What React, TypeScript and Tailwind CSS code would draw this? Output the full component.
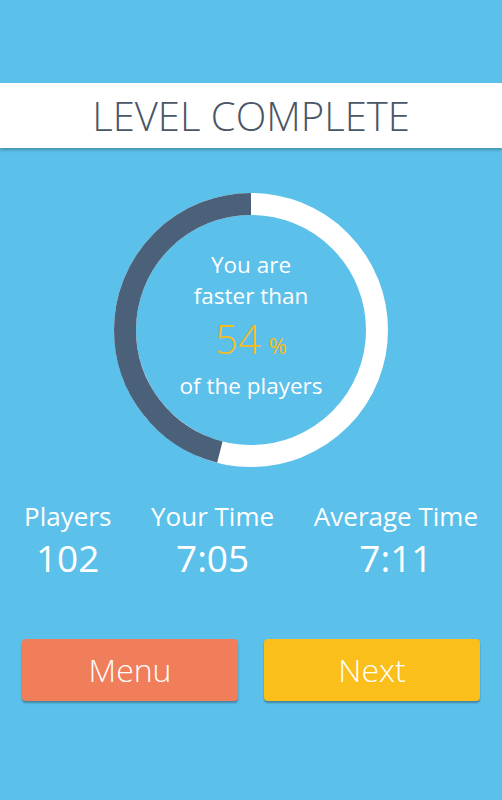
import React from "react";

const stats = [
  { label: "Players", value: "102" },
  { label: "Your Time", value: "7:05" },
  { label: "Average Time", value: "7:11" },
];

function Ring({ percent }: { percent: number }) {
  const r = 126;
  const c = 2 * Math.PI * r;
  const dark = (100 - percent) / 100;
  return (
    <svg width="274" height="274" viewBox="0 0 274 274">
      <circle cx="137" cy="137" r={r} fill="none" stroke="#ffffff" strokeWidth="22" />
      <circle
        cx="137"
        cy="137"
        r={r}
        fill="none"
        stroke="#4b6079"
        strokeWidth="22"
        strokeDasharray={`${c * dark} ${c}`}
        transform="rotate(-90 137 137) scale(1 -1) translate(0 -274)"
      />
    </svg>
  );
}

export default function App() {
  return (
    <div
      className="w-[502px] h-[800px] bg-[#5bc0ea] overflow-hidden text-white"
      style={{ fontFamily: '"Open Sans", "Noto Sans", sans-serif' }}
    >
      {/* Header */}
      <div className="mt-[83px] h-[65px] bg-white shadow-[0_2px_3px_rgba(0,0,0,0.25)] flex items-center justify-center">
        <h1 className="text-[40px] font-light text-[#4a5566] leading-none">LEVEL COMPLETE</h1>
      </div>

      {/* Ring */}
      <div className="mt-[45px] flex justify-center">
        <div className="relative w-[274px] h-[274px]">
          <Ring percent={54} />
          <div className="absolute inset-0 flex flex-col items-center justify-center pb-[10px]">
            <p className="text-[22.5px] leading-[31px] text-center">You are</p>
            <p className="text-[22.5px] leading-[31px] text-center">faster than</p>
            <p className="text-[#f6bb1d] flex items-baseline">
              <span className="text-[40px] leading-[55px] font-light">54</span>
              <span className="text-[22px] leading-[30px] ml-[8px]">%</span>
            </p>
            <p className="text-[22.5px] leading-[31px] mt-[4px] text-center">of the players</p>
          </div>
        </div>
      </div>

      {/* Stats */}
      <div className="mt-[34px] flex justify-between px-[24px]">
        {stats.map((s) => (
          <div key={s.label} className="flex flex-col items-center">
            <span className="text-[26px] leading-[30px]">{s.label}</span>
            <span className="text-[37px] leading-[40px] mt-[7px]">{s.value}</span>
          </div>
        ))}
      </div>

      {/* Buttons */}
      <div className="mt-[61px] flex justify-between px-[22px]">
        <button className="w-[216px] h-[62px] rounded-[4px] bg-[#f07e5b] shadow-[0_2px_2px_rgba(0,0,0,0.3)] text-[32px] font-light text-white">
          Menu
        </button>
        <button className="w-[216px] h-[62px] rounded-[4px] bg-[#fbbf1c] shadow-[0_2px_2px_rgba(0,0,0,0.3)] text-[32px] font-light text-white">
          Next
        </button>
      </div>
    </div>
  );
}
